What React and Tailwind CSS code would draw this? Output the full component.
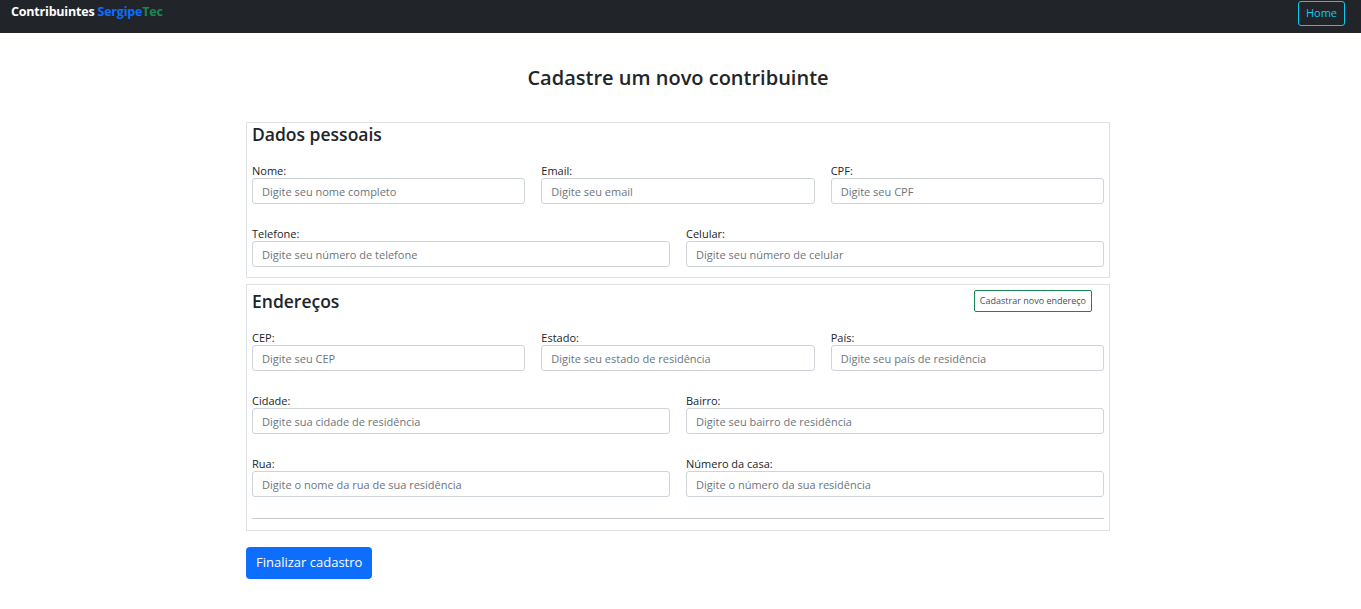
import React from 'react';

const font = { fontFamily: '"Open Sans", "Noto Sans", sans-serif' };

function Field({ label, placeholder }) {
  return (
    <div className="flex flex-col">
      <label className="text-[11px] leading-[15px] text-[#212529]">{label}</label>
      <input
        placeholder={placeholder}
        className="h-[26px] w-full rounded-[3px] border border-[#ced4da] bg-white px-[9px] text-[11px] text-[#212529] placeholder:text-[#6c757d] outline-none"
      />
    </div>
  );
}

export default function App() {
  return (
    <div className="min-h-screen bg-white text-[#212529]" style={font}>
      <nav className="h-[33px] bg-[#212529] flex items-start justify-between pl-[11px] pr-[16px]">
        <div className="text-[12.5px] font-bold leading-[24px] tracking-[-0.2px]">
          <span className="text-white">Contribuintes </span>
          <span className="text-[#0d6efd]">Sergipe</span>
          <span className="text-[#198754]">Tec</span>
        </div>
        <button className="mt-[1px] h-[25px] px-[7px] rounded-[3px] border border-[#0dcaf0] text-[#0dcaf0] text-[11px]">
          Home
        </button>
      </nav>

      <div className="pr-[5px]">
        <div className="mx-auto w-[864px]">
          <h1 className="mt-[31px] text-center text-[20px] font-semibold leading-[28px] text-[#212529]">
            Cadastre um novo contribuinte
          </h1>

          {/* Dados pessoais */}
          <section className="mt-[30px] border border-[#dee2e6] px-[5px] pb-[10px]">
            <h2 className="text-[17.5px] font-semibold leading-[22px]">Dados pessoais</h2>
            <div className="mt-[18px] grid grid-cols-3 gap-x-[16px]">
              <Field label="Nome:" placeholder="Digite seu nome completo" />
              <Field label="Email:" placeholder="Digite seu email" />
              <Field label="CPF:" placeholder="Digite seu CPF" />
            </div>
            <div className="mt-[22px] grid grid-cols-2 gap-x-[16px]">
              <Field label="Telefone:" placeholder="Digite seu número de telefone" />
              <Field label="Celular:" placeholder="Digite seu número de celular" />
            </div>
          </section>

          {/* Endereços */}
          <section className="mt-[6px] border border-[#dee2e6] px-[5px] pt-[5px] pb-[11px]">
            <div className="flex items-start justify-between">
              <h2 className="text-[17.5px] font-semibold leading-[22px]">Endereços</h2>
              <button className="mr-[12px] h-[22px] px-[5px] rounded-[2px] border border-[#198754] text-[9px] text-[#495057]">
                Cadastrar novo endereço
              </button>
            </div>
            <div className="mt-[18px] grid grid-cols-3 gap-x-[16px]">
              <Field label="CEP:" placeholder="Digite seu CEP" />
              <Field label="Estado:" placeholder="Digite seu estado de residência" />
              <Field label="País:" placeholder="Digite seu país de residência" />
            </div>
            <div className="mt-[22px] grid grid-cols-2 gap-x-[16px]">
              <Field label="Cidade:" placeholder="Digite sua cidade de residência" />
              <Field label="Bairro:" placeholder="Digite seu bairro de residência" />
            </div>
            <div className="mt-[22px] grid grid-cols-2 gap-x-[16px]">
              <Field label="Rua:" placeholder="Digite o nome da rua de sua residência" />
              <Field label="Número da casa:" placeholder="Digite o número da sua residência" />
            </div>
            <hr className="mt-[21px] border-t border-[#c8c8c8]" />
          </section>

          <button className="mt-[16px] h-[32px] px-[10px] rounded-[4px] bg-[#0d6efd] text-white text-[13px]">
            Finalizar cadastro
          </button>
        </div>
      </div>
    </div>
  );
}
